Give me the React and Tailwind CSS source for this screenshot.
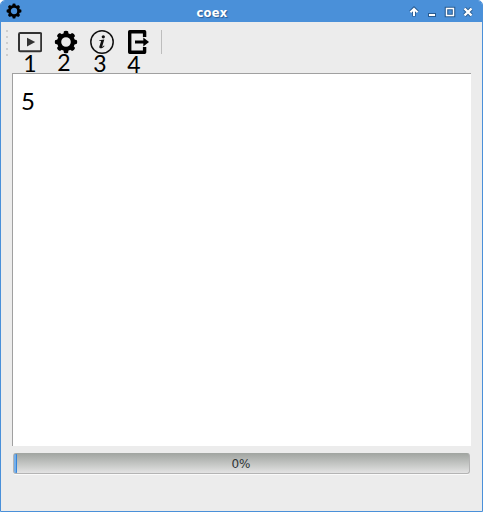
import React from 'react';

const TEETH = [0, 45, 90, 135, 180, 225, 270, 315];
const DOTS = [30, 36, 42, 48, 54];

function Gear({ className }) {
  return (
    <svg viewBox="0 0 24 24" className={className} fill="none" stroke="#000">
      <circle cx="12" cy="12" r="6.9" strokeWidth="4.2" />
      {TEETH.map((a) => (
        <path key={a} d="M9.4 4.5 L9.9 1.3 Q12 .2 14.1 1.3 L14.6 4.5Z" fill="#000" stroke="none" transform={`rotate(${a} 12 12)`} />
      ))}
    </svg>
  );
}

function Play() {
  return (
    <svg viewBox="0 0 24 24" className="h-6 w-6">
      <rect x="1" y="3" width="22.2" height="18.2" rx="1.2" fill="none" stroke="#333" strokeWidth="2" />
      <path d="M9 7.8v8.6l8.2-4.3z" fill="#333" />
    </svg>
  );
}

function Info() {
  return (
    <svg viewBox="0 0 24 24" className="h-6 w-6">
      <circle cx="12" cy="12" r="11.2" fill="none" stroke="#111" strokeWidth="1.5" />
      <circle cx="13.3" cy="6.8" r="1.6" fill="#111" />
      <path d="M9.1 10.2l5.2-.6-2 6.7c-.2.8.4.7 1.7-.7l.5.4c-1.8 2.6-5.4 3.2-5.2.7l1.7-5.1c.1-.6-.2-.8-1.9-.8z" fill="#111" />
    </svg>
  );
}

function Exit() {
  return (
    <svg viewBox="0 0 24 24" className="h-6 w-6" fill="none" stroke="#000">
      <path d="M18.6 7V1.8H3.7V22.2H18.6V17" strokeWidth="3.4" strokeLinejoin="round" />
      <path d="M9 12h9" strokeWidth="3" />
      <path d="M17.3 7.4v9.2l5.7-4.6z" fill="#000" stroke="none" />
    </svg>
  );
}

function Tool({ label, children, className }) {
  return (
    <div className="flex w-6 flex-col items-center">
      {children}
      <span className={`-mt-px h-[19px] text-[23px] leading-[19px] text-black ${className}`}>{label}</span>
    </div>
  );
}

function WindowButtons() {
  return (
    <svg viewBox="0 0 72 22" className="h-[22px] w-[72px]" fill="none">
      <g stroke="#285b91" strokeWidth="3.6">
        <path d="M6 16.5V9.5M2.5 12L6 8.5L9.5 12" />
        <path d="M20 15H28" strokeWidth="4" />
        <path d="M38.5 8.5h7v7h-7z" />
        <path d="M56.5 8.5L63.5 15.5M63.5 8.5L56.5 15.5" strokeWidth="4" />
      </g>
      <g stroke="#fff" strokeWidth="2">
        <path d="M6 16V9.5M2.5 12.3L6 8.8L9.5 12.3" />
        <path d="M21 15H27" />
        <path d="M38.5 8.5h7v7h-7z" strokeWidth="1.4" />
        <path d="M56.5 8.5L63.5 15.5M63.5 8.5L56.5 15.5" strokeWidth="2.4" />
      </g>
    </svg>
  );
}

export default function App() {
  return (
    <div className="h-[512px] w-[483px] bg-white">
      <div className="flex h-full w-full flex-col overflow-hidden rounded-t-[5px] border border-[#4a90d9] bg-[#ececec]">
        <header className="flex h-[21px] shrink-0 items-center bg-[#4a90d9]">
          <div className="flex w-[20px] pl-[5px]">
            <Gear className="-mt-0.5 h-4 w-4 shrink-0" />
          </div>
          <h1 className="flex-1 pt-[3px] pr-[5px] text-center font-['DejaVu_Sans'] text-[11.5px] leading-4 font-bold tracking-[0.3px] text-white [text-shadow:1px_1px_1px_#285b91]">coex</h1>
          <div className="-mt-px w-[74px] shrink-0"><WindowButtons /></div>
        </header>

        <nav className="flex h-[51px] shrink-0 items-start pt-2 pl-[5px] font-[Lato,sans-serif]">
          <svg viewBox="0 28 3 28" className="-mt-0.5 mr-[9px] h-7 w-[3px]">
            {DOTS.map((y) => <rect key={y} x="0" y={y} width="2" height="2" fill="#cecece" />)}
          </svg>
          <div className="flex gap-3">
            <Tool label="1" className="pt-px"><Play /></Tool>
            <Tool label="2" className="-ml-1"><Gear className="h-6 w-6" /></Tool>
            <Tool label="3" className="-ml-1 pt-px"><Info /></Tool>
            <Tool label="4" className="-ml-2 pt-0.5"><Exit /></Tool>
          </div>
          <div className="ml-[11px] h-6 w-px bg-[#bdbdbd]" />
        </nav>

        <main className="mr-[11px] ml-[11px] h-[373px] shrink-0 border-t border-l border-[#a0a0a0] bg-white pt-[13px] pl-2 font-[Lato,sans-serif] text-[24px] leading-7 text-black">
          5
        </main>

        <div className="relative mx-3 mt-[7px] flex h-[21px] shrink-0 items-center justify-center overflow-hidden rounded-[3px] border border-[#b4b4b4] border-t-[#a2a6a2] bg-linear-to-b from-[#a3a7a3] to-[#e3e3e3] shadow-[0_1px_0_#fafafa]">
          <div className="absolute -top-px -left-px h-[21px] w-1 rounded-[2px] border border-[#3584d8] bg-[#73aeea]" />
          <span className="pr-px font-['DejaVu_Sans'] text-[12px] leading-4 text-[#2e3436]">0%</span>
        </div>
      </div>
    </div>
  );
}
